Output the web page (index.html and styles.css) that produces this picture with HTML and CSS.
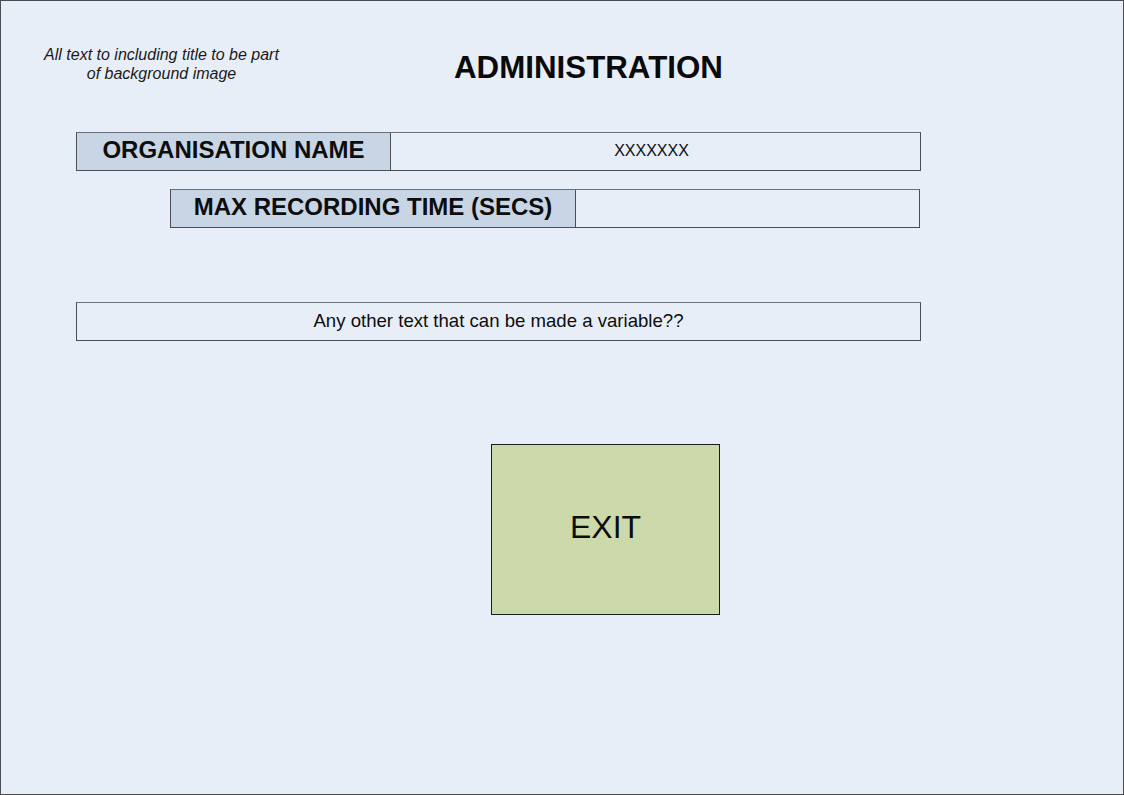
FILE: index.html
```html
<!DOCTYPE html>
<html lang="en">
<head>
<meta charset="utf-8">
<title>Administration</title>
<link rel="stylesheet" href="styles.css">
</head>
<body>
<div class="page">
  <header class="header">
    <p class="note">All text to including title to be part<br>of background image</p>
    <h1 class="title">ADMINISTRATION</h1>
  </header>
  <div class="field field-org">
    <div class="field-label label-org">ORGANISATION NAME</div>
    <div class="field-value">XXXXXXX</div>
  </div>
  <div class="field field-max">
    <div class="field-label label-max">MAX RECORDING TIME (SECS)</div>
    <div class="field-value"></div>
  </div>
  <div class="field field-other">
    <div class="field-value other-text">Any other text that can be made a variable??</div>
  </div>
  <button class="exit" type="button">EXIT</button>
</div>
</body>
</html>
```
FILE: styles.css
```css
html, body {
  margin: 0;
  padding: 0;
}
body {
  font-family: "Liberation Sans", Arial, sans-serif;
  color: #0d0d0d;
}
.page {
  box-sizing: border-box;
  width: 1124px;
  height: 795px;
  border: 1px solid #4a4d54;
  background: #e8eef8;
  overflow: hidden;
}
.header {
  display: flex;
  align-items: flex-start;
  height: 131px;
}
.note {
  width: 321px;
  margin: 44px 0 0 0;
  font-size: 16px;
  line-height: 19px;
  font-style: italic;
  text-align: center;
  color: #1a1a1a;
}
.title {
  margin: 49px 0 0 132px;
  font-size: 31.3px;
  line-height: 36px;
  font-weight: bold;
  color: #0a0a0a;
}
.field {
  box-sizing: border-box;
  display: flex;
  height: 39px;
  border: 1px solid #4a4e57;
  border-top-color: #6b707a;
}
.field-org {
  width: 845px;
  margin-left: 75px;
}
.field-max {
  width: 750px;
  margin-left: 169px;
  margin-top: 18px;
}
.field-other {
  width: 845px;
  margin-left: 75px;
  margin-top: 74px;
}
.field-label {
  box-sizing: border-box;
  display: flex;
  align-items: center;
  justify-content: center;
  background: #c8d5e4;
  border-right: 1px solid #4a4e57;
  font-size: 24px;
  font-weight: bold;
  padding-bottom: 3px;
  white-space: nowrap;
}
.label-org {
  width: 314px;
}
.label-max {
  width: 405px;
}
.field-value {
  flex: 1;
  display: flex;
  align-items: center;
  justify-content: center;
  font-size: 16px;
  padding-bottom: 2px;
  padding-right: 8px;
}
.other-text {
  font-size: 18.6px;
  padding-right: 0;
}
.exit {
  display: block;
  box-sizing: border-box;
  width: 229px;
  height: 171px;
  margin: 103px 0 0 490px;
  padding: 0 0 4px 0;
  background: #ccdaab;
  border: 1px solid #1c1c1c;
  border-radius: 0;
  font-family: "Liberation Sans", Arial, sans-serif;
  font-size: 32px;
  color: #0d0d0d;
  cursor: pointer;
}
```
